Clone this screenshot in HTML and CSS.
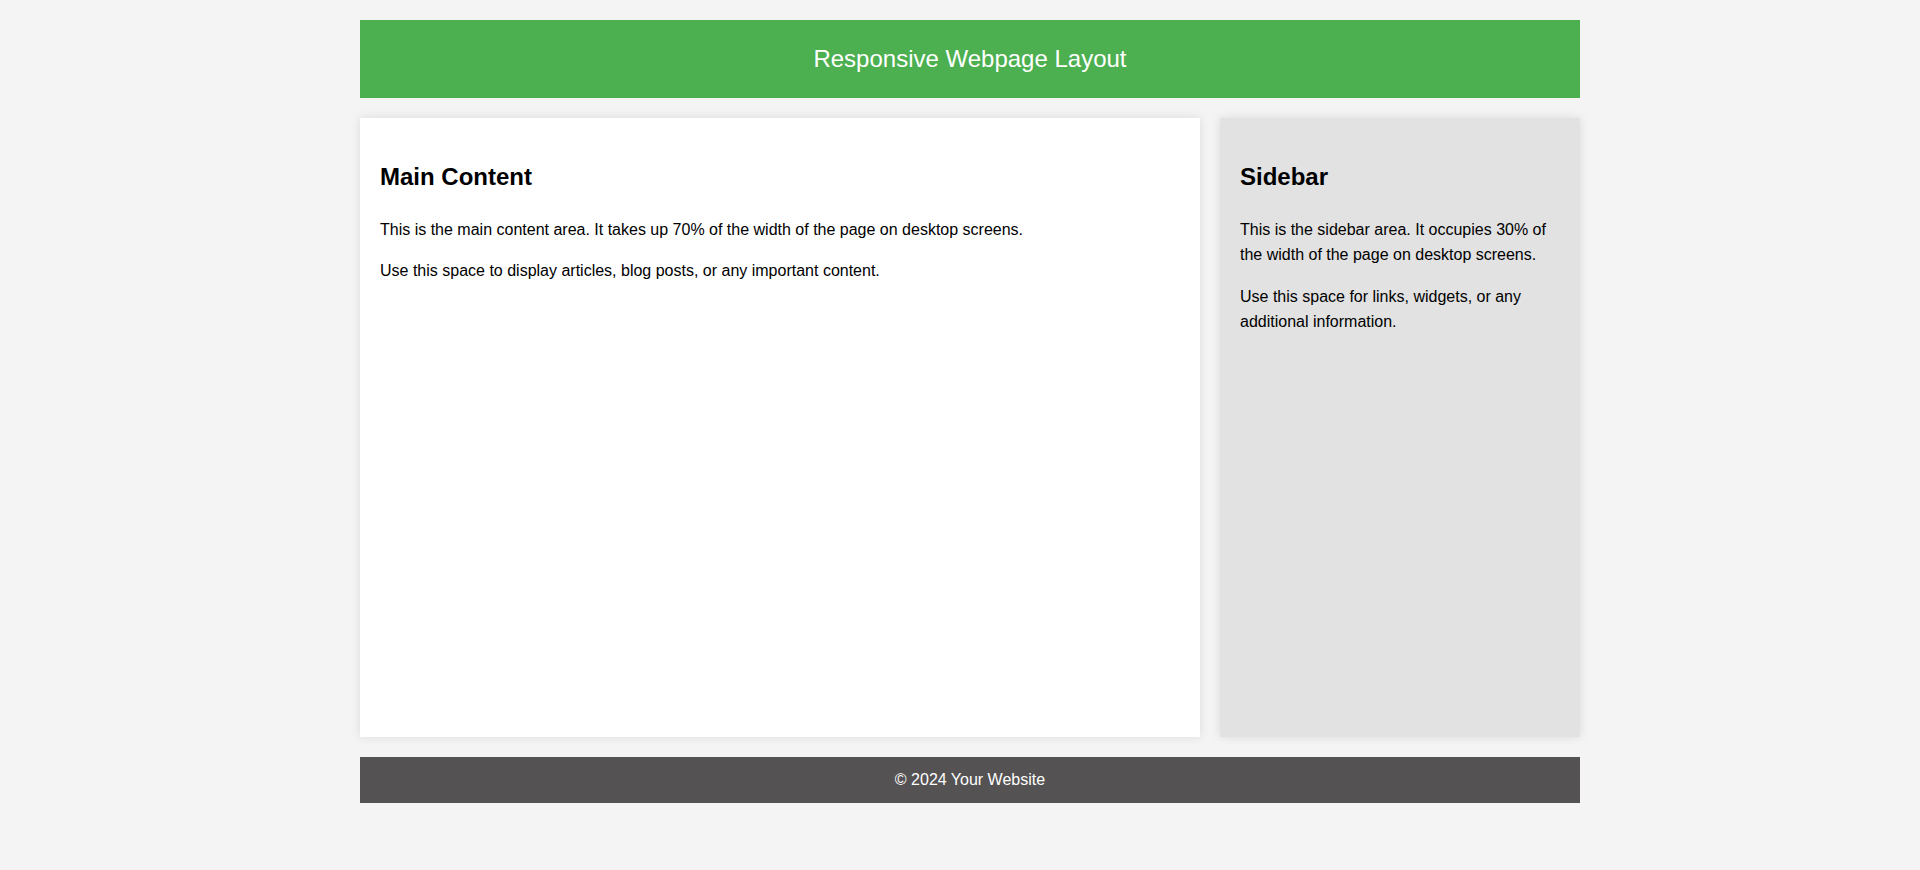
FILE: index.html
```html
<!DOCTYPE html>
<html lang="en">
<head>
<meta charset="UTF-8">
<title>Responsive Webpage Layout</title>
<link rel="stylesheet" href="styles.css">
</head>
<body>
<div class="container">
  <header class="site-header">
    <h1 class="site-title">Responsive Webpage Layout</h1>
  </header>
  <div class="layout">
    <main class="main-content">
      <h2 class="section-title">Main Content</h2>
      <p>This is the main content area. It takes up 70% of the width of the page on desktop screens.</p>
      <p>Use this space to display articles, blog posts, or any important content.</p>
    </main>
    <aside class="sidebar">
      <h2 class="section-title">Sidebar</h2>
      <p>This is the sidebar area. It occupies 30% of the width of the page on desktop screens.</p>
      <p>Use this space for links, widgets, or any additional information.</p>
    </aside>
  </div>
  <footer class="site-footer">&copy; 2024 Your Website</footer>
</div>
</body>
</html>
```

FILE: styles.css
```css
html, body {
  margin: 0;
  padding: 0;
}

body {
  background: #f4f4f4;
  font-family: "Liberation Sans", Arial, sans-serif;
  font-size: 16px;
  line-height: 1.6;
  color: #000;
}

.container {
  width: 1220px;
  margin: 20px 0 0 calc(50% - 600px);
}

.site-header {
  background: #4caf50;
  color: #fff;
  text-align: center;
  padding: 20px 0;
}

.site-title {
  margin: 0;
  font-size: 24px;
  font-weight: normal;
}

.layout {
  display: grid;
  grid-template-columns: 840px 360px;
  gap: 20px;
  margin-top: 20px;
}

.main-content,
.sidebar {
  padding: 20px;
  min-height: 579px;
  box-shadow: 0 0 10px rgba(0, 0, 0, 0.1);
}

.main-content {
  background: #fff;
}

.sidebar {
  background: #e2e2e2;
}

.section-title {
  font-size: 24px;
  font-weight: bold;
  margin: 0.83em 0;
}

.main-content p,
.sidebar p {
  margin: 16px 0;
}

.site-footer {
  margin-top: 20px;
  background: #545253;
  color: #fff;
  text-align: center;
  padding: 10px 0;
}
```
